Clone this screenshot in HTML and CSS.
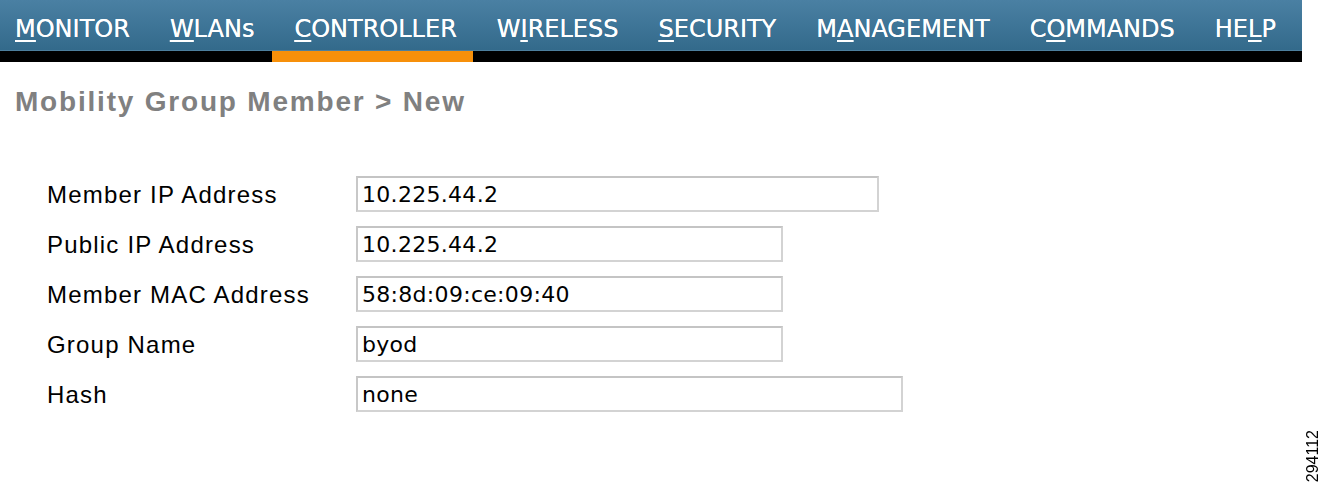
FILE: index.html
```html
<!DOCTYPE html>
<html lang="en">
<head>
  <meta charset="UTF-8" />
  <title>Mobility Group Member &gt; New</title>
  <link rel="stylesheet" href="styles.css">
</head>
<body>

  <div class="topbar">
    <ul class="menu">
      <li><u>M</u>ONITOR</li>
      <li><u>W</u>LANs</li>
      <li class="active"><u>C</u>ONTROLLER</li>
      <li>W<u>I</u>RELESS</li>
      <li><u>S</u>ECURITY</li>
      <li>M<u>A</u>NAGEMENT</li>
      <li>C<u>O</u>MMANDS</li>
      <li>HE<u>L</u>P</li>
    </ul>
    <div class="strip"></div>
  </div>

  <h1>Mobility Group Member &gt; New</h1>

  <form class="form">
    <div class="row">
      <label>Member IP Address</label>
      <input type="text" class="wide" value="10.225.44.2" />
    </div>
    <div class="row">
      <label>Public IP Address</label>
      <input type="text" value="10.225.44.2" />
    </div>
    <div class="row">
      <label>Member MAC Address</label>
      <input type="text" value="58:8d:09:ce:09:40" />
    </div>
    <div class="row">
      <label>Group Name</label>
      <input type="text" value="byod" />
    </div>
    <div class="row">
      <label>Hash</label>
      <input type="text" class="wider" value="none" />
    </div>
  </form>

  <div class="figno">294112</div>

</body>
</html>
```

FILE: styles.css
```css
* {
  margin: 0; padding: 0; box-sizing: border-box;
}

body {
  background: #ffffff;
  font-family: 'Liberation Sans', Arial, sans-serif;
  width: 1325px;
  height: 494px;
  overflow: hidden;
  position: relative;
}

.topbar {
  width: 1302px;
}

.menu {
  list-style: none;
  display: flex;
  height: 51px;
  padding-left: 15px;
  gap: 40px;
  background: linear-gradient(#4a80a3, #336a8b);
  border-bottom: 1px solid #4d7f9d;
}

.menu li {
  position: relative;
  color: #ffffff;
  font-family: 'DejaVu Sans', Verdana, sans-serif;
  font-size: 24px;
  height: 50px;
  line-height: 59px;
  text-shadow: 0 0 0.4px #ffffff;
}

.menu li u {
  text-decoration-thickness: 2px;
  text-underline-offset: 3px;
}

.menu li.active::after {
  content: "";
  position: absolute;
  left: -22px;
  right: -16px;
  top: 51px;
  height: 11px;
  background: #f7900a;
}

.strip {
  height: 11px;
  background: #000000;
}

h1 {
  margin: 23px 0 0 15px;
  font-size: 28px;
  font-weight: bold;
  letter-spacing: 1.8px;
  color: #808080;
  line-height: 33px;
}

.form {
  margin: 58px 0 0 47px;
  display: flex;
  flex-direction: column;
  gap: 14px;
}

.row {
  display: flex;
  align-items: center;
  height: 36px;
}

.row label {
  width: 309px;
  font-size: 24px;
  letter-spacing: 1.2px;
  color: #000000;
  position: relative;
  top: 1px;
}

.row input {
  width: 427px;
  height: 36px;
  padding: 0 4px;
  border: 2px solid #d3d3d3;
  border-top-color: #c4c4c4;
  border-left-color: #c8c8c8;
  font-family: 'DejaVu Sans', sans-serif;
  font-size: 22px;
  letter-spacing: 0.3px;
  color: #000000;
  background: #ffffff;
  outline: none;
}

.row input.wide {
  width: 523px;
}

.row input.wider {
  width: 547px;
}

.figno {
  position: absolute;
  right: 4px;
  top: 430px;
  writing-mode: vertical-rl;
  transform: rotate(180deg);
  font-size: 16px;
  line-height: 16px;
  color: #000000;
}
```
